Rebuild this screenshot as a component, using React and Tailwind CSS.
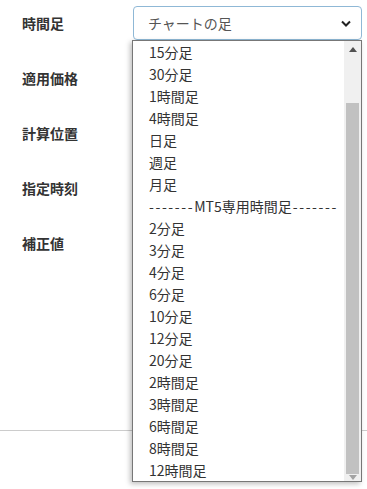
const labels = ['時間足', '適用価格', '計算位置', '指定時刻', '補正値'];

const options = [
  '15分足',
  '30分足',
  '1時間足',
  '4時間足',
  '日足',
  '週足',
  '月足',
  'sep',
  '2分足',
  '3分足',
  '4分足',
  '6分足',
  '10分足',
  '12分足',
  '20分足',
  '2時間足',
  '3時間足',
  '6時間足',
  '8時間足',
  '12時間足',
];

const font = { fontFamily: '"Noto Sans CJK JP", "Noto Sans", sans-serif' };

const App = () => {
  return (
    <div className="relative w-[367px] h-[489px] bg-white overflow-hidden text-[#333]" style={font}>
      <div className="pt-[6px] pl-[22px]">
        {labels.map((label, i) => (
          <div key={i} className="flex items-center h-[34px] mb-[21px]">
            <span className="w-[111px] text-[14px] font-bold leading-none">{label}</span>
            {i === 0 && (
              <div className="flex items-center justify-between w-[229px] h-[34px] border border-[#8fb8d6] rounded-[4px] pl-[14px] pr-[10px] text-[14px] text-[#555]">
                <span>チャートの足</span>
                <svg width="10" height="7" viewBox="0 0 10 7">
                  <path d="M1 1.5 L5 5.5 L9 1.5" fill="none" stroke="#222" strokeWidth="2" />
                </svg>
              </div>
            )}
          </div>
        ))}
      </div>

      <div className="absolute left-0 right-0 top-[430px] h-px bg-[#cccccc]"></div>

      {/* open listbox */}
      <div className="absolute left-[132px] top-[40px] w-[230px] h-[442px] flex bg-white border border-[#777] shadow-[-2px_2px_5px_rgba(0,0,0,0.25)]">
        <ul className="flex-1 overflow-hidden">
          {options.map((opt, i) => (
            <li key={i} className="h-[22px] flex items-center pl-[16px] text-[14px] text-[#333] whitespace-nowrap">
              {opt === 'sep' ? (
                <>
                  <span className="tracking-[1.6px]">-------</span>
                  <span>MT5専用時間足</span>
                  <span className="tracking-[1.6px] ml-[1px]">-------</span>
                </>
              ) : (
                opt
              )}
            </li>
          ))}
        </ul>
        <div className="w-[17px] h-full bg-[#f0f0f0] flex flex-col items-center">
          <div className="h-[17px] w-full flex items-center justify-center">
            <svg width="8" height="5" viewBox="0 0 8 5">
              <path d="M0 5 L4 0 L8 5 Z" fill="#505050" />
            </svg>
          </div>
          <div className="mt-[45px] w-[13px] h-[371px] bg-[#c1c1c1]"></div>
          <div className="flex-1 w-full flex items-center justify-center">
            <svg width="8" height="5" viewBox="0 0 8 5">
              <path d="M0 0 L8 0 L4 5 Z" fill="#a3a3a3" />
            </svg>
          </div>
        </div>
      </div>
    </div>
  );
};

export default App;
